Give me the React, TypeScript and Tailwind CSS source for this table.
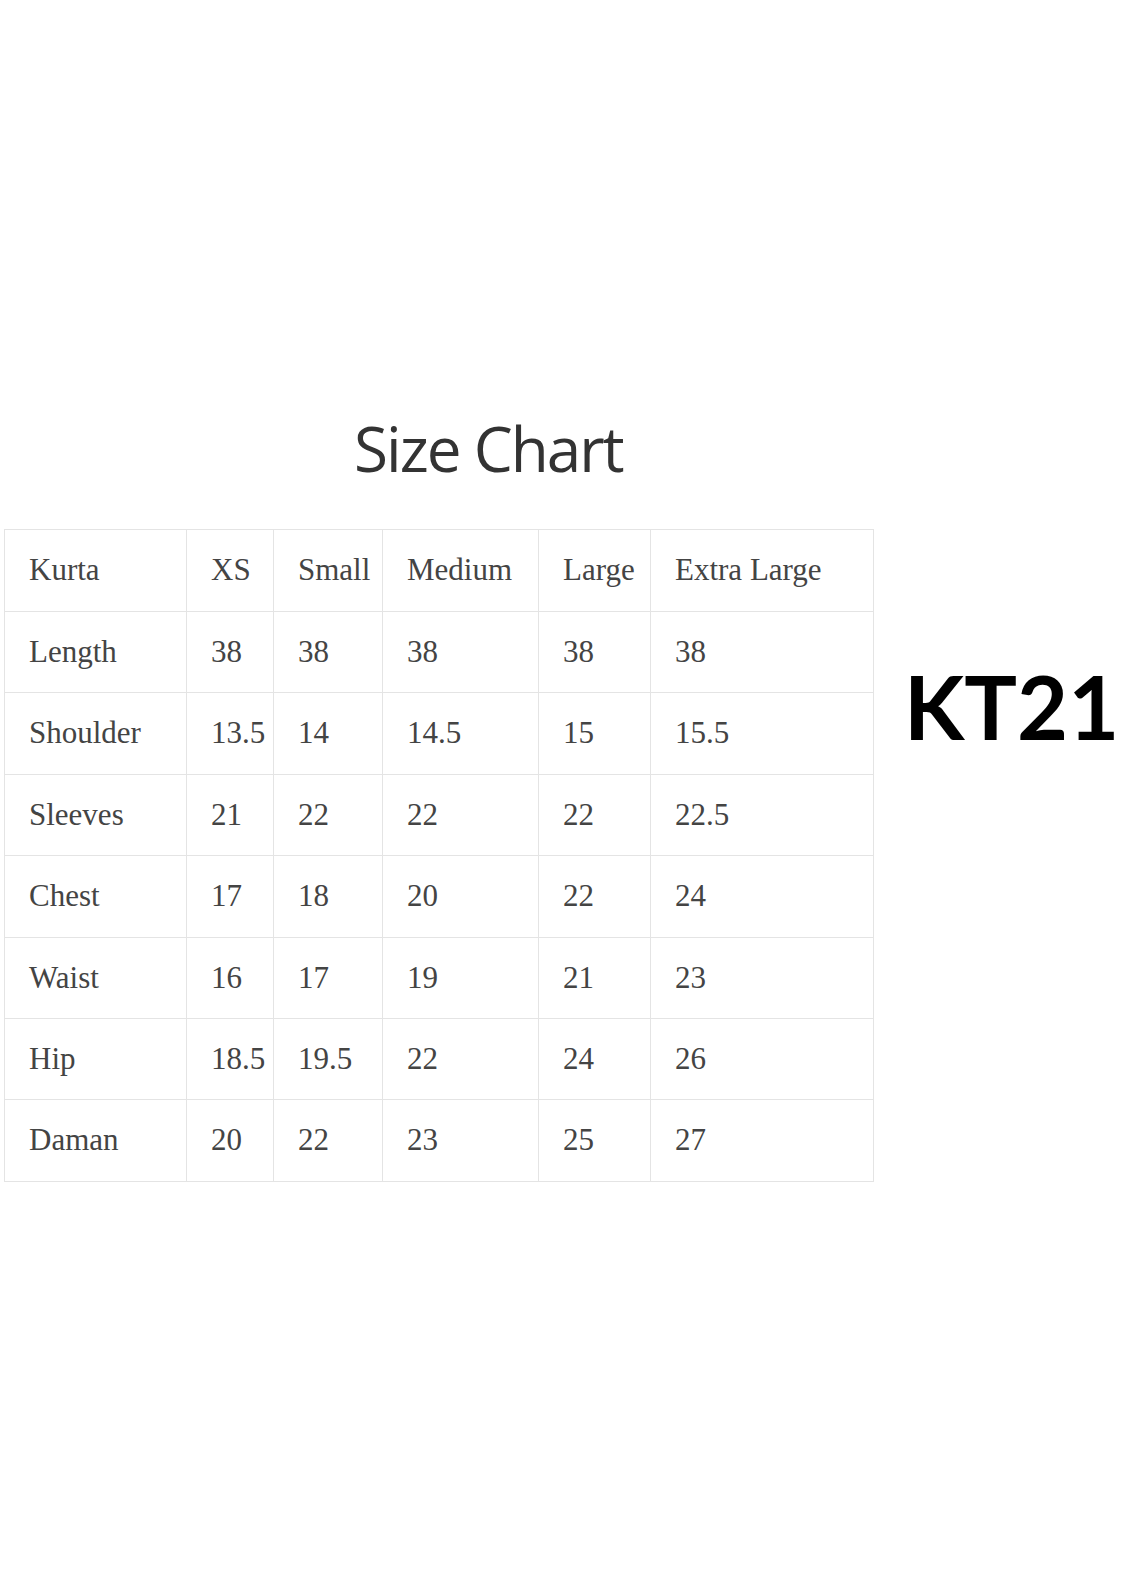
const header = ["Kurta", "XS", "Small", "Medium", "Large", "Extra Large"];

const rows: string[][] = [
  ["Length", "38", "38", "38", "38", "38"],
  ["Shoulder", "13.5", "14", "14.5", "15", "15.5"],
  ["Sleeves", "21", "22", "22", "22", "22.5"],
  ["Chest", "17", "18", "20", "22", "24"],
  ["Waist", "16", "17", "19", "21", "23"],
  ["Hip", "18.5", "19.5", "22", "24", "26"],
  ["Daman", "20", "22", "23", "25", "27"],
];

const colWidths = ["w-[182px]", "w-[87px]", "w-[109px]", "w-[156px]", "w-[112px]", "w-[223px]"];

function Cell({ children }: { children: React.ReactNode }) {
  return (
    <td className="border border-[#e4e4e4] pl-[24px] pr-0 align-middle whitespace-nowrap">
      {children}
    </td>
  );
}

export default function App() {
  return (
    <div className="w-[1138px] h-[1584px] bg-white pt-[412px]">
      <h1
        className="pl-[354px] text-[62px] leading-[72px] tracking-[-2px] text-[#333333] font-normal"
        style={{ fontFamily: '"Open Sans", "Noto Sans", sans-serif' }}
      >
        Size Chart
      </h1>

      <div className="mt-[45px] flex items-start pl-[4px]">
        <table
          className="border-collapse table-fixed text-[31px] text-[#444444]"
          style={{ fontFamily: '"Liberation Serif", "Times New Roman", serif' }}
        >
          <colgroup>
            {colWidths.map((w, i) => (
              <col key={i} className={w} />
            ))}
          </colgroup>
          <tbody>
            <tr className="h-[82px]">
              {header.map((h) => (
                <Cell key={h}>{h}</Cell>
              ))}
            </tr>
            {rows.map((r) => (
              <tr key={r[0]} className="h-[81.4px]">
                {r.map((c, i) => (
                  <Cell key={i}>{c}</Cell>
                ))}
              </tr>
            ))}
          </tbody>
        </table>

        <div
          className="ml-[30px] mt-[133px] text-[88px] leading-none font-bold text-black"
          style={{ fontFamily: 'Lato, "Open Sans", sans-serif' }}
        >
          KT21
        </div>
      </div>
    </div>
  );
}
